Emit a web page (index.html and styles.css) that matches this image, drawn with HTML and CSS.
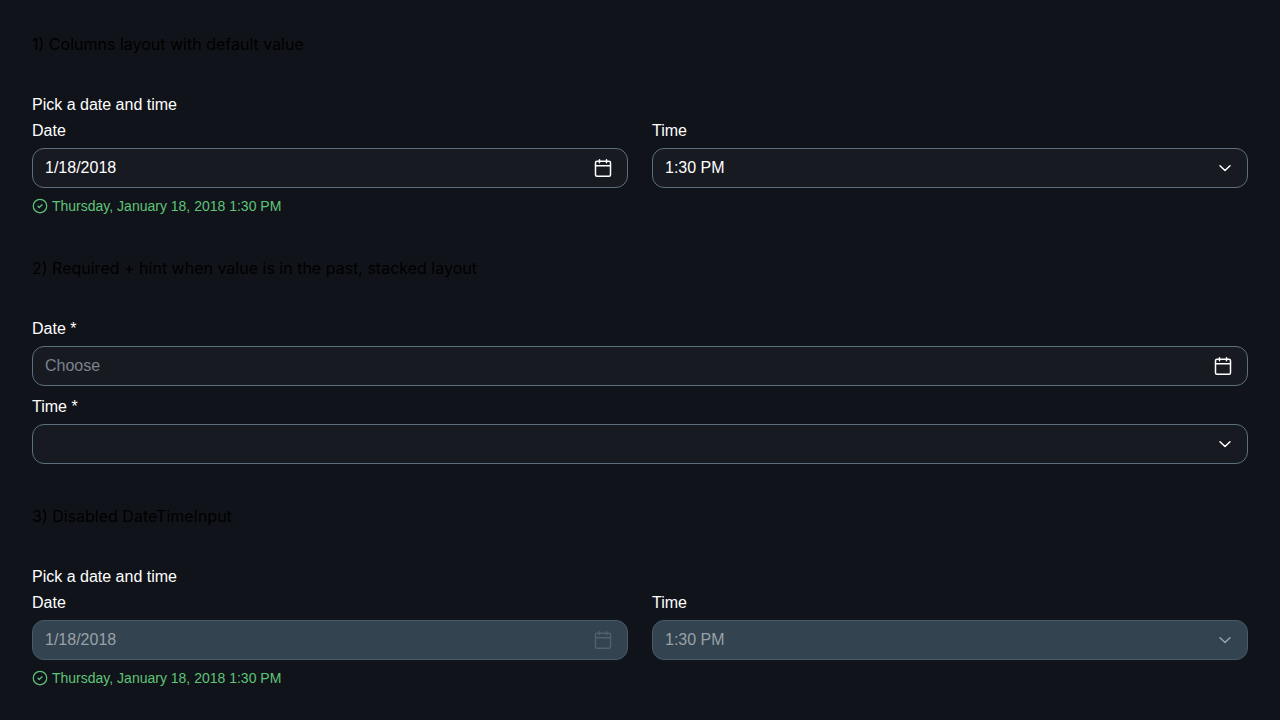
FILE: index.html
```html
<!DOCTYPE html>
<html lang="en">

<head>
  <meta charset="UTF-8">
  <meta name="viewport" content="width=device-width, initial-scale=1.0">
  <title>DateTimeInput</title>
  <link rel="stylesheet" href="styles.css">
</head>

<body>
  <!-- Shared icons -->
  <svg class="icon-sprite" aria-hidden="true">
    <symbol id="icon-calendar" viewBox="0 0 20 20">
      <rect x="2.5" y="3.25" width="15" height="15" rx="1.5" />
      <path d="M2.5 7.75h15M6.5 1.75v3M13.5 1.75v3" />
    </symbol>
    <symbol id="icon-chevron" viewBox="0 0 20 20">
      <path d="M5 7.75L10 12.5l5-4.75" />
    </symbol>
    <symbol id="icon-check" viewBox="0 0 16 16">
      <circle cx="8" cy="8" r="6.75" />
      <path d="M6 8.250l1.250 1.250L10 6.750" />
    </symbol>
  </svg>

  <main>
    <section>
      <!-- Columns layout -->
      <h2>1) Columns layout with default value</h2>
      <fieldset>
        <legend>Pick a date and time</legend>
        <div class="columns">
          <div class="field">
            <label for="date-1">Date</label>
            <div class="control">
              <input id="date-1" type="text" value="1/18/2018">
              <button type="button" aria-label="Choose date"><svg class="icon"><use href="#icon-calendar" /></svg></button>
            </div>
          </div>
          <div class="field">
            <label for="time-1">Time</label>
            <div class="control">
              <select id="time-1">
                <option>1:30 PM</option>
              </select>
              <svg class="icon chevron" aria-hidden="true"><use href="#icon-chevron" /></svg>
            </div>
          </div>
        </div>
        <p class="message"><svg class="icon"><use href="#icon-check" /></svg>Thursday, January 18, 2018 1:30 PM</p>
      </fieldset>
    </section>

    <section>
      <!-- Stacked layout -->
      <h2>2) Required + hint when value is in the past, stacked layout</h2>
      <div class="stacked">
        <div class="field">
          <label for="date-2">Date *</label>
          <div class="control">
            <input id="date-2" type="text" placeholder="Choose" required>
            <button type="button" aria-label="Choose date"><svg class="icon"><use href="#icon-calendar" /></svg></button>
          </div>
        </div>
        <div class="field">
          <label for="time-2">Time *</label>
          <div class="control">
            <select id="time-2" required>
              <option value=""></option>
            </select>
            <svg class="icon chevron" aria-hidden="true"><use href="#icon-chevron" /></svg>
          </div>
        </div>
      </div>
    </section>

    <section>
      <!-- Disabled state -->
      <h2>3) Disabled DateTimeInput</h2>
      <fieldset disabled>
        <legend>Pick a date and time</legend>
        <div class="columns">
          <div class="field">
            <label for="date-3">Date</label>
            <div class="control disabled">
              <input id="date-3" type="text" value="1/18/2018">
              <button type="button" aria-label="Choose date"><svg class="icon"><use href="#icon-calendar" /></svg></button>
            </div>
          </div>
          <div class="field">
            <label for="time-3">Time</label>
            <div class="control disabled">
              <select id="time-3">
                <option>1:30 PM</option>
              </select>
              <svg class="icon chevron" aria-hidden="true"><use href="#icon-chevron" /></svg>
            </div>
          </div>
        </div>
        <p class="message"><svg class="icon"><use href="#icon-check" /></svg>Thursday, January 18, 2018 1:30 PM</p>
      </fieldset>
    </section>
  </main>
</body>

</html>
```

FILE: styles.css
```css
* {
  box-sizing: border-box;
}

body {
  background-color: #11131a;
  color: white;
  font-family: "Liberation Sans", Arial, sans-serif;
  font-size: 16px;
  line-height: 24px;
  margin: 0;
}

main {
  display: flex;
  flex-direction: column;
  gap: 40px;
  padding: 32px 32px 30px;
}

h2 {
  color: black;
  font-family: Inter, sans-serif;
  font-size: 16px;
  font-weight: 400;
  margin: 0 0 36px;
}

fieldset {
  border: none;
  margin: 0;
  min-width: 0;
  padding: 0;
}

legend,
label {
  padding: 0;
  line-height: 26px;
}

.columns {
  display: grid;
  grid-template-columns: 1fr 1fr;
  gap: 24px;
}

.stacked {
  display: flex;
  flex-direction: column;
  gap: 8px;
}

.field {
  display: flex;
  flex-direction: column;
  gap: 4px;
}

.control {
  position: relative;
  display: flex;
  align-items: center;
  height: 40px;
  background-color: #181a22;
  border: 1px solid #5d707e;
  border-radius: 12px;
  overflow: hidden;
}

input,
select {
  flex: 1;
  min-width: 0;
  height: 100%;
  padding: 0 12px;
  appearance: none;
  background: none;
  border: none;
  color: white;
  font: inherit;
  opacity: 1;
}

input::placeholder {
  color: #7a828c;
}

button {
  display: flex;
  padding: 8px 14px;
  background: none;
  border: none;
  color: white;
  cursor: pointer;
}

.icon {
  width: 20px;
  height: 20px;
  fill: none;
  stroke: currentColor;
  stroke-width: 1.5;
  stroke-linecap: round;
  stroke-linejoin: round;
}

/* Sits over the select, clicks go through */
.chevron {
  position: absolute;
  right: 12px;
  pointer-events: none;
}

.message {
  display: flex;
  align-items: center;
  gap: 4px;
  margin: 8px 0 0;
  color: #5fc477;
  font-size: 14px;
  line-height: 20px;
}

.message .icon {
  width: 16px;
  height: 16px;
  stroke-width: 1.25;
}

.disabled {
  background-color: #33434f;
  border-color: #485a69;
}

.disabled input,
.disabled select,
.disabled .chevron {
  color: #99a1a7;
}

.disabled button {
  color: #4f606e;
  cursor: default;
}

.icon-sprite {
  display: none;
}
```
